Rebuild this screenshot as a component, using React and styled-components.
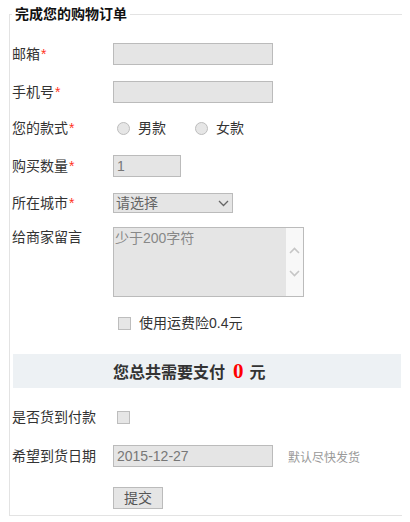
import React from "react";
import styled, { createGlobalStyle } from "styled-components";

const Global = createGlobalStyle`
  html, body { background: #fff; }
  body {
    margin: 6px 8px 0 8px;
    font-family: "Liberation Sans", "Noto Sans CJK SC", sans-serif;
    font-size: 14px;
    color: #333;
  }
  * { box-sizing: border-box; }
`;

const Fieldset = styled.fieldset`
  margin: 0 0 0 1px;
  width: 396px;
  border: 1px solid #e3e3e3;
  padding: 0 2px 6px 2px;
  min-width: 0;
`;

const Legend = styled.legend`
  padding: 0 3px;
  margin-left: 0;
  font-size: 14px;
  font-weight: bold;
  line-height: 16px;
  color: #111;
`;

const Row = styled.div`
  display: flex;
  align-items: ${(p) => (p.$top ? "flex-start" : "center")};
  min-height: 22px;
  margin-top: ${(p) => p.$mt}px;
`;

const Label = styled.label`
  flex: 0 0 101px;
  font-size: 14px;
  line-height: 20px;
  color: #333;
  white-space: nowrap;
`;

const Star = styled.span`
  color: #f32;
  margin-left: 1px;
`;

const TextInput = styled.input`
  width: ${(p) => p.$w || 160}px;
  height: 22px;
  background: #e5e5e5;
  border: 1px solid #bbb;
  padding: 0 3px;
  font-family: "Liberation Sans", "Noto Sans CJK SC", sans-serif;
  font-size: 14px;
  color: #777;
  outline: none;
  margin: 0;
`;

const Choice = styled.label`
  display: flex;
  align-items: center;
  margin-left: ${(p) => p.$ml}px;
  font-size: 14px;
  line-height: 20px;
  color: #333;
`;

const Radio = styled.input.attrs({ type: "radio" })`
  appearance: none;
  width: 13px;
  height: 13px;
  margin: 0 8px 0 0;
  border-radius: 50%;
  background: #e6e6e6;
  border: 1px solid #bdbdbd;
`;

const Check = styled.input.attrs({ type: "checkbox" })`
  appearance: none;
  width: 13px;
  height: 13px;
  margin: 0 ${(p) => p.$mr || 0}px 0 ${(p) => p.$ml || 0}px;
  background: #e6e6e6;
  border: 1px solid #bdbdbd;
  border-radius: 0;
`;

const SelectWrap = styled.div`
  position: relative;
  width: 120px;
  height: 20px;
`;

const Select = styled.select`
  appearance: none;
  width: 120px;
  height: 20px;
  background: #e5e5e5;
  border: 1px solid #bbb;
  padding: 0 2px;
  font-family: "Liberation Sans", "Noto Sans CJK SC", sans-serif;
  font-size: 14px;
  color: #666;
  outline: none;
  border-radius: 0;
`;

const SelectArrow = styled.svg`
  position: absolute;
  right: 4px;
  top: 7px;
  pointer-events: none;
`;

const AreaBox = styled.div`
  display: flex;
  width: 191px;
  height: 70px;
  border: 1px solid #bbb;
  background: #e5e5e5;
`;

const Area = styled.textarea`
  flex: 1;
  border: none;
  background: #e5e5e5;
  resize: none;
  padding: 1px 1px;
  font-family: "Liberation Sans", "Noto Sans CJK SC", sans-serif;
  font-size: 14px;
  line-height: 18px;
  color: #777;
  outline: none;
  overflow: hidden;
  &::placeholder { color: #888; }
`;

const Track = styled.div`
  width: 17px;
  background: #f8f8f8;
  display: flex;
  flex-direction: column;
  align-items: center;
  padding-top: 19px;
  gap: 16px;
`;

const Spacer = styled.div`
  flex: 0 0 101px;
`;

const CheckText = styled.span`
  font-size: 14px;
  line-height: 20px;
  color: #333;
`;

const TotalBar = styled.div`
  margin: 20px 1px 0 1px;
  height: 34px;
  background: #edf1f4;
  display: flex;
  align-items: center;
  padding-left: 100px;
  font-size: 16px;
  font-weight: bold;
  color: #333;
`;

const Amount = styled.span`
  font-family: "Liberation Serif", serif;
  font-size: 21px;
  font-weight: bold;
  color: #f00;
  margin: 0 6px 0 8px;
`;

const Hint = styled.span`
  margin-left: 15px;
  font-size: 12px;
  color: #999;
`;

const Button = styled.button`
  width: 50px;
  height: 22px;
  background: #e5e5e5;
  border: 1px solid #bbb;
  font-family: "Liberation Sans", "Noto Sans CJK SC", sans-serif;
  font-size: 14px;
  line-height: 18px;
  color: #555;
  padding: 0;
  border-radius: 0;
`;

const Chevron = ({ up }) => (
  <svg width="11" height="7" viewBox="0 0 11 7">
    <path
      d={up ? "M1 6 L5.5 1.5 L10 6" : "M1 1 L5.5 5.5 L10 1"}
      fill="none"
      stroke="#c6c6c6"
      strokeWidth="1.6"
    />
  </svg>
);

export default function App() {
  return (
    <>
      <Global />
      <form onSubmit={(e) => e.preventDefault()}>
        <Fieldset>
          <Legend>完成您的购物订单</Legend>

          <Row $mt={21}>
            <Label>邮箱<Star>*</Star></Label>
            <TextInput />
          </Row>

          <Row $mt={16}>
            <Label>手机号<Star>*</Star></Label>
            <TextInput />
          </Row>

          <Row $mt={14}>
            <Label>您的款式<Star>*</Star></Label>
            <Choice $ml={4}><Radio name="style" />男款</Choice>
            <Choice $ml={29}><Radio name="style" />女款</Choice>
          </Row>

          <Row $mt={16}>
            <Label>购买数量<Star>*</Star></Label>
            <TextInput $w={68} defaultValue="1" />
          </Row>

          <Row $mt={15}>
            <Label>所在城市<Star>*</Star></Label>
            <SelectWrap>
              <Select defaultValue="">
                <option value="">请选择</option>
              </Select>
              <SelectArrow width="11" height="7" viewBox="0 0 11 7">
                <path d="M1 1 L5.5 5.5 L10 1" fill="none" stroke="#666" strokeWidth="1.3" />
              </SelectArrow>
            </SelectWrap>
          </Row>

          <Row $mt={13} $top>
            <Label>给商家留言</Label>
            <AreaBox>
              <Area placeholder="少于200字符" />
              <Track>
                <Chevron up />
                <Chevron />
              </Track>
            </AreaBox>
          </Row>

          <Row $mt={15}>
            <Spacer />
            <Check $ml={5} $mr={8} />
            <CheckText>使用运费险0.4元</CheckText>
          </Row>

          <TotalBar>
            您总共需要支付<Amount>0</Amount>元
          </TotalBar>

          <Row $mt={18}>
            <Label>是否货到付款</Label>
            <Check $ml={4} />
          </Row>

          <Row $mt={17}>
            <Label>希望到货日期</Label>
            <TextInput defaultValue="2015-12-27" />
            <Hint>默认尽快发货</Hint>
          </Row>

          <Row $mt={20}>
            <Spacer />
            <Button type="submit">提交</Button>
          </Row>
        </Fieldset>
      </form>
    </>
  );
}
